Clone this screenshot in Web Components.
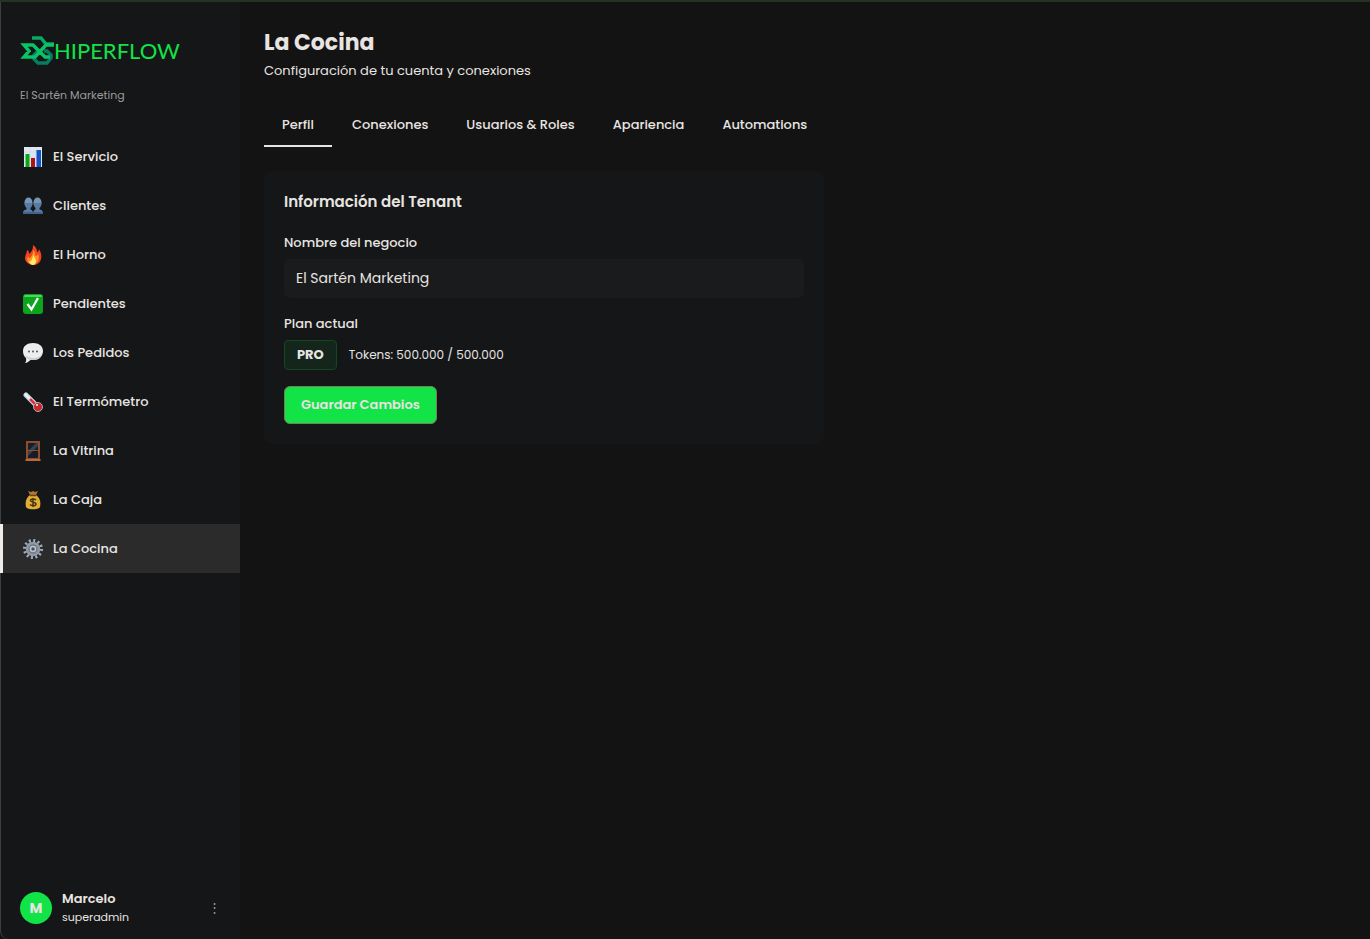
<!DOCTYPE html>
<html lang="es">
<head>
<meta charset="UTF-8">
<meta name="viewport" content="width=device-width, initial-scale=1">
<title>Hiperflow - La Cocina</title>
<style>
    :root {
        --bg: #131313;
        --panel: #141617;
        --field: #1a1b1d;
        --text: #e8e4e1;
        --muted: #9b9b9a;
        --accent: #12e347;
    }

    * {
        box-sizing: border-box;
    }

    body {
        margin: 0;
        background: var(--bg);
        color: var(--text);
        font-family: Poppins, Inter, sans-serif;
        font-size: 13px;
    }
</style>
</head>
<body>
<app-shell>
    <app-sidebar slot="sidebar" tenant="El Sartén Marketing">
        <nav-item icon="chart">El Servicio</nav-item>
        <nav-item icon="people">Clientes</nav-item>
        <nav-item icon="fire">El Horno</nav-item>
        <nav-item icon="check">Pendientes</nav-item>
        <nav-item icon="chat">Los Pedidos</nav-item>
        <nav-item icon="thermo">El Termómetro</nav-item>
        <nav-item icon="window">La Vitrina</nav-item>
        <nav-item icon="money">La Caja</nav-item>
        <nav-item icon="gear" active>La Cocina</nav-item>
        <user-card slot="user" name="Marcelo" role-name="superadmin"></user-card>
    </app-sidebar>
    <page-header heading="La Cocina">Configuración de tu cuenta y conexiones</page-header>
    <tab-bar></tab-bar>
    <tenant-card></tenant-card>
</app-shell>

<script>
    const ICONS = {
        chart: `<rect x="1" y="0" width="18" height="20" fill="#dfe8f2"/>
            <path d="M1 5h18M1 10h18M1 15h18M7 0v20M13 0v20" stroke="#c3d0df" stroke-width=".5"/>
            <rect x="2.5" y="7" width="4" height="13" fill="#0da512"/>
            <rect x="8" y="11" width="4" height="9" fill="#b4101c"/>
            <rect x="13.5" y="3" width="4.5" height="17" fill="#1155c4"/>`,
        people: `<g fill="#7796b5"><ellipse cx="5.5" cy="6.5" rx="4" ry="5"/><ellipse cx="14.5" cy="6.5" rx="4" ry="5"/></g>
            <g fill="#577ba1"><path d="M1.5 7h8c0 3-1 4-2 5v1.500c2 .7 2.500 1.500 2.500 4.500H0c0-3 .5-3.800 3.500-4.500V12c-1-1-2-2-2-5z"/>
            <path d="M10.500 7h8c0 3-1 4-2 5v1.500c3 .7 3.500 1.500 3.500 4.500H10.500c0-3 0-3.800 2-4.500V12c-1-1-2-2-2-5z"/></g>
            <path d="M0 16h20v2H0z" fill="#41658c"/>`,
        fire: `<path d="M10 0c4 3 4 5 4 7 1 0 2-1 2-3 2 3 3 7 2 10-1 4-4 6-8 6s-8-3-8-7c0-3 2-5 2-8 2 1 2 2 2 4 3-2 4-5 4-9z" fill="#f0431e"/>
            <path d="M10 5c2 2 3 4 2 6 2 0 3-1 3-3 2 6 0 11-5 11s-7-4-5-8c0 1 1 2 2 2 2-2 3-4 3-8z" fill="#ff912c"/>
            <path d="M10 10c1 2 3 4 3 6s-1 4-3 4-4-2-4-4c1 1 1 1 2 0 1-2 2-3 2-6z" fill="#ffed68"/>`,
        check: `<rect width="20" height="20" rx="3" fill="#0aa51c"/><rect x="1" y="1" width="18" height="2" rx="1" fill="#52d35c"/>
            <path d="M4.500 10l4 5.500L15 4" fill="none" stroke="#fff" stroke-width="2.300"/>`,
        chat: `<path d="M10 0c6 0 10 3 10 8s-4 9-10 9H7.500C6 18.500 4 20 2 20c1-1 1.500-3 1-5-2-1.500-3-4-3-7 0-5 4-8 10-8z" fill="#ededed"/>
            <path d="M2 12c2 2 5 3 8 3s7-1 9-4c-1 5-5 6-9 6s-7-2-8-5z" fill="#cfcfcf"/>
            <g fill="#555"><circle cx="6" cy="8.500" r="1"/><circle cx="10" cy="8.500" r="1"/><circle cx="14" cy="8.500" r="1"/></g>`,
        thermo: `<path d="M3 3l11 11" stroke="#c9d7e2" stroke-width="5" stroke-linecap="round"/>
            <path d="M2 2l5 5" stroke="#eef5fa" stroke-width="2"/>
            <path d="M7 7l7 7" stroke="#e03235" stroke-width="2.500"/>
            <circle cx="15" cy="15" r="4.500" fill="#c8272e" stroke="#a9aeb6"/><circle cx="14" cy="13" r="1" fill="#fff"/>`,
        window: `<path d="M3 0h14v18H3z" fill="#8f4d2f"/><path d="M2.500 18h15v2h-15z" fill="#b9673f"/>
            <path d="M5 2h10v7H5zM5 10h10v7H5z" fill="#171d25"/>
            <path d="M15 2v3l-4 4H6l7-7zM5 10h5l-5 5z" fill="#35424f"/>`,
        money: `<path d="M7 5h6c4 3 5 7 4 12-1 3-13 3-14 0-1-5 0-9 4-12z" fill="#dfae35"/>
            <path d="M5 1l3 1 2-1 2 1 3-1-2 4H7z" fill="#b07530"/><path d="M7 5.500h6" stroke="#6c3e17" stroke-width="1.500"/>
            <path d="M13 10c-1-1.500-5.500-1.500-5.500 .5s5.500 1.300 5.500 3.500-4.500 2-6 .5M10 8v9" fill="none" stroke="#4a3310" stroke-width="1.500"/>`,
        gear: `<circle cx="10" cy="10" r="8.500" fill="none" stroke="#a2afbb" stroke-width="3" stroke-dasharray="2 2.450"/>
            <circle cx="10" cy="10" r="6" fill="#6d7883" stroke="#8e9aa6" stroke-width="2.500"/>
            <circle cx="10" cy="10" r="2.500" fill="#4b525a" stroke="#bdc6cd" stroke-width="1.500"/>`
    };

    class AppShell extends HTMLElement {
        constructor() {
            super();
            this.attachShadow({ mode: "open" });
        }

        connectedCallback() {
            this.shadowRoot.innerHTML = `
                <style>
                    :host {
                        display: grid;
                        grid-template-columns: 240px 1fr;
                        min-height: 100vh;
                        box-sizing: border-box;
                        border-top: 2px solid #253326;
                    }

                    main {
                        padding: 24px;
                        min-width: 0;
                    }
                </style>
                <slot name="sidebar"></slot>
                <main><slot></slot></main>
            `;
        }
    }

    class BrandLogo extends HTMLElement {
        constructor() {
            super();
            this.attachShadow({ mode: "open" });
        }

        connectedCallback() {
            this.shadowRoot.innerHTML = `
                <style>
                    :host {
                        display: flex;
                        align-items: center;
                        height: 32px;
                        color: var(--accent);
                        font-family: Lato, sans-serif;
                        font-size: 22px;
                        line-height: 32px;
                    }

                    svg {
                        flex: none;
                    }
                </style>
                <svg width="34" height="32" viewBox="0 0 34 32" fill="none" stroke-width="3.500" aria-hidden="true">
                    <path d="M18 16l-4 4v4l4 4h9l4-5v-3l-4-4h-3" stroke="#087c61"/>
                    <path d="M12 3h9l5 6h8" stroke="#08a866"/>
                    <path d="M34 10h-8L15 22H4l5-6-5-6h9l12 12h5" stroke="#08c466"/>
                </svg>
                <span>HIPERFLOW</span>
            `;
        }
    }

    class AppSidebar extends HTMLElement {
        constructor() {
            super();
            this.attachShadow({ mode: "open" });
        }

        connectedCallback() {
            this.shadowRoot.innerHTML = `
                <style>
                    :host {
                        display: flex;
                        flex-direction: column;
                        background: var(--panel);
                        box-shadow: inset 1px 0 #3b3d3e;
                        border-bottom-left-radius: 8px;
                    }

                    header {
                        padding: 33px 20px 29px;
                    }

                    p {
                        margin: 20px 0 0;
                        color: var(--muted);
                        font-size: 11px;
                        line-height: 16px;
                    }

                    nav {
                        flex: 1;
                    }
                </style>
                <header>
                    <brand-logo></brand-logo>
                    <p>${this.getAttribute("tenant")}</p>
                </header>
                <nav><slot></slot></nav>
                <slot name="user"></slot>
            `;
        }
    }

    class NavItem extends HTMLElement {
        constructor() {
            super();
            this.attachShadow({ mode: "open" });
        }

        connectedCallback() {
            this.shadowRoot.innerHTML = `
                <style>
                    :host {
                        display: block;
                    }

                    a {
                        display: flex;
                        align-items: center;
                        gap: 10px;
                        height: 49px;
                        padding: 0 20px;
                        border-left: 3px solid transparent;
                        box-sizing: border-box;
                        color: var(--text);
                        font-weight: 500;
                        text-decoration: none;
                    }

                    :host([active]) a {
                        background: #2b2b2b;
                        border-left-color: #f0ece9;
                    }
                </style>
                <a href="#"${this.hasAttribute("active") ? ' aria-current="page"' : ""}>
                    <svg width="20" height="20" viewBox="0 0 20 20" aria-hidden="true">${ICONS[this.getAttribute("icon")]}</svg>
                    <slot></slot>
                </a>
            `;
        }
    }

    class UserCard extends HTMLElement {
        constructor() {
            super();
            this.attachShadow({ mode: "open" });
        }

        connectedCallback() {
            const name = this.getAttribute("name");
            this.shadowRoot.innerHTML = `
                <style>
                    :host {
                        display: flex;
                        align-items: center;
                        gap: 10px;
                        padding: 13px 20px;
                    }

                    .avatar {
                        display: grid;
                        place-items: center;
                        width: 32px;
                        height: 32px;
                        border-radius: 50%;
                        background: var(--accent);
                        font-size: 14px;
                        font-weight: 700;
                    }

                    .info {
                        flex: 1;
                        font-size: 11px;
                        line-height: 18px;
                    }

                    strong {
                        display: block;
                        font-size: 13px;
                        font-weight: 600;
                    }

                    button {
                        width: 12px;
                        padding: 0;
                        border: 0;
                        background: none;
                        color: var(--muted);
                        font: inherit;
                        cursor: pointer;
                    }
                </style>
                <span class="avatar">${name[0]}</span>
                <div class="info"><strong>${name}</strong>${this.getAttribute("role-name")}</div>
                <button type="button" aria-label="Opciones">⋮</button>
            `;
        }
    }

    class PageHeader extends HTMLElement {
        constructor() {
            super();
            this.attachShadow({ mode: "open" });
        }

        connectedCallback() {
            this.shadowRoot.innerHTML = `
                <style>
                    :host {
                        display: block;
                        margin-bottom: 24px;
                    }

                    h1 {
                        margin: 0 0 2px;
                        font-size: 22px;
                        font-weight: 700;
                        line-height: 34px;
                    }

                    p {
                        margin: 0;
                        line-height: 18px;
                    }
                </style>
                <h1>${this.getAttribute("heading")}</h1>
                <p><slot></slot></p>
            `;
        }
    }

    class TabBar extends HTMLElement {
        constructor() {
            super();
            this.tabs = ["Perfil", "Conexiones", "Usuarios & Roles", "Apariencia", "Automations"];
            this.selected = "Perfil";
            this.attachShadow({ mode: "open" });
        }

        connectedCallback() {
            this.shadowRoot.innerHTML = `
                <style>
                    :host {
                        display: block;
                        margin-bottom: 24px;
                    }

                    div {
                        display: flex;
                        gap: 2px;
                    }

                    button {
                        height: 43px;
                        padding: 0 18px;
                        border: 0;
                        border-bottom: 2px solid transparent;
                        background: none;
                        color: var(--text);
                        font: inherit;
                        font-weight: 500;
                        cursor: pointer;
                    }

                    button[aria-selected="true"] {
                        border-bottom-color: var(--text);
                    }
                </style>
                <div role="tablist"></div>
            `;
            this.shadowRoot.querySelector("div").addEventListener("click", (e) => this.handleClick(e));
            this.render();
        }

        handleClick(e) {
            if (e.target.localName !== "button") return;
            this.selected = e.target.textContent;
            this.render();
        }

        render() {
            const list = this.shadowRoot.querySelector("div");
            list.innerHTML = "";
            this.tabs.forEach((tab) => {
                const button = document.createElement("button");
                button.type = "button";
                button.setAttribute("role", "tab");
                button.setAttribute("aria-selected", tab === this.selected);
                button.textContent = tab;
                list.appendChild(button);
            });
        }
    }

    class TenantCard extends HTMLElement {
        constructor() {
            super();
            this.attachShadow({ mode: "open" });
        }

        connectedCallback() {
            this.shadowRoot.innerHTML = `
                <style>
                    :host {
                        display: block;
                        box-sizing: border-box;
                        max-width: 560px;
                        padding: 20px;
                        border-radius: 8px;
                        background: var(--panel);
                    }

                    h2 {
                        margin: 0 0 20px;
                        font-size: 15px;
                        font-weight: 600;
                        line-height: 22px;
                    }

                    label, .label {
                        display: block;
                        margin: 0 0 6px;
                        font-weight: 500;
                        line-height: 20px;
                    }

                    input {
                        display: block;
                        box-sizing: border-box;
                        width: 100%;
                        height: 39px;
                        margin-bottom: 16px;
                        padding: 0 12px;
                        border: 0;
                        border-radius: 6px;
                        background: var(--field);
                        color: inherit;
                        font: inherit;
                        font-size: 14px;
                    }

                    .plan {
                        display: flex;
                        align-items: center;
                        gap: 12px;
                        margin-bottom: 16px;
                        font-size: 12px;
                    }

                    .badge {
                        padding: 4px 12px;
                        border: 1px solid #14461f;
                        border-radius: 4px;
                        background: #14261b;
                        font-size: 13px;
                        font-weight: 700;
                        line-height: 20px;
                    }

                    button {
                        height: 38px;
                        padding: 0 16px;
                        border: 1px solid #7d7b58;
                        border-radius: 6px;
                        background: var(--accent);
                        color: var(--text);
                        font: inherit;
                        font-weight: 600;
                        cursor: pointer;
                    }
                </style>
                <h2>Información del Tenant</h2>
                <label for="business">Nombre del negocio</label>
                <input id="business" type="text" value="El Sartén Marketing">
                <p class="label">Plan actual</p>
                <div class="plan"><span class="badge">PRO</span><span>Tokens: 500.000 / 500.000</span></div>
                <button type="button">Guardar Cambios</button>
            `;
        }
    }

    customElements.define("app-shell", AppShell);
    customElements.define("brand-logo", BrandLogo);
    customElements.define("app-sidebar", AppSidebar);
    customElements.define("nav-item", NavItem);
    customElements.define("user-card", UserCard);
    customElements.define("page-header", PageHeader);
    customElements.define("tab-bar", TabBar);
    customElements.define("tenant-card", TenantCard);
</script>
</body>
</html>
